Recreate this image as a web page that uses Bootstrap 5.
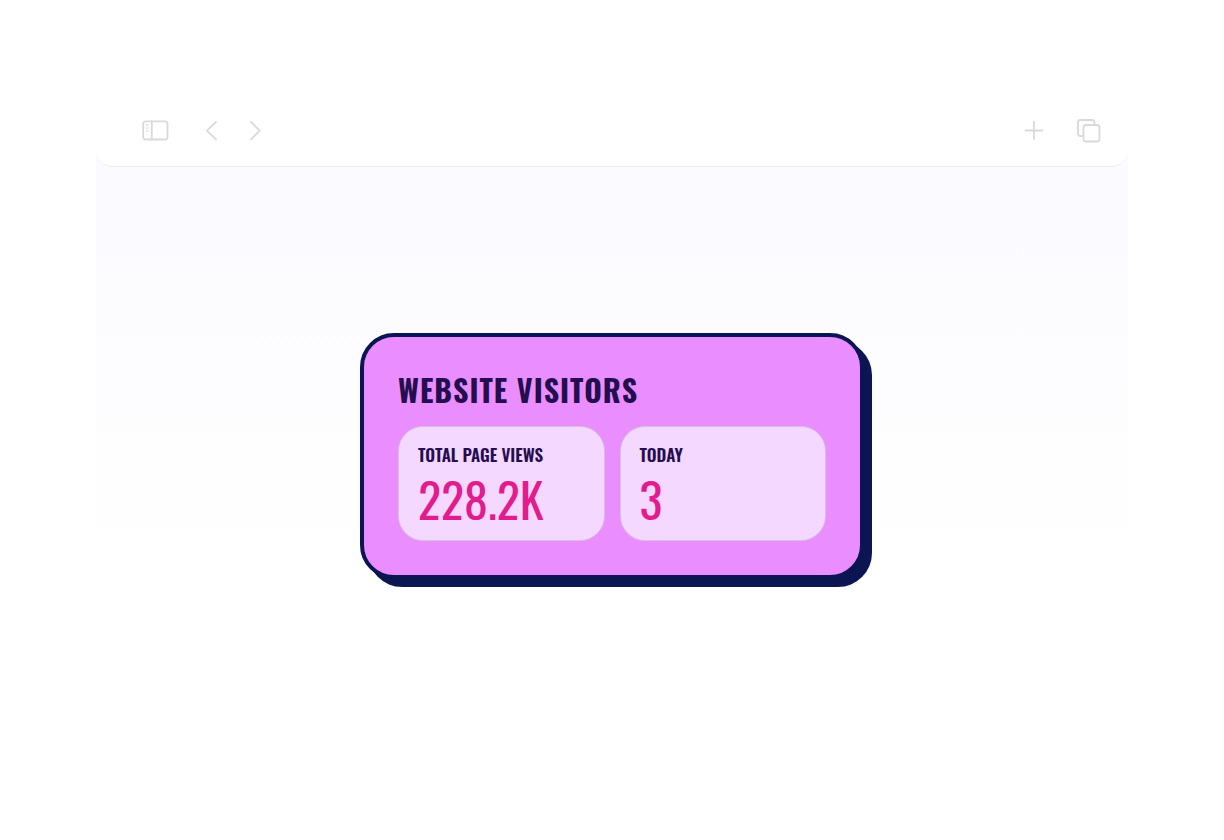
<!DOCTYPE html>
<html lang="en">
<head>
<meta charset="utf-8">
<meta name="viewport" content="width=device-width, initial-scale=1">
<title>Website Visitors</title>
<link href="https://cdn.jsdelivr.net/npm/bootstrap@5.3.0/dist/css/bootstrap.min.css" rel="stylesheet">
<style>
  body { background: #fff; font-family: Oswald, "Liberation Sans Narrow", "Liberation Sans", sans-serif; color: #240e50; }
  .page { padding: 96px; }
  .browser-view { background: linear-gradient(#fafaff 70px, #fcfcff 200px, #fefefe 400px, #fff 500px); }
  .toolbar { height: 71px; padding: 0 26px 0 46px; background: #fff; border-bottom: 1px solid #ededf0; border-radius: 0 0 16px 16px; }
  .tool { padding: 0; border: 0; background: none; line-height: 0; }
  .tool svg { fill: none; stroke: #d9d9d9; stroke-width: 1.8; stroke-linecap: round; stroke-linejoin: round; }
  .stage { padding: 166px 16px 0; }
  .visitors { width: 100%; max-width: 504px; padding: 34px; background: #ea8eff; border: 4px solid #0a1551; border-radius: 34px; box-shadow: 8px 8px 0 #0a1551; }
  .visitors h1 { font-size: 30px; line-height: 38px; margin-bottom: 17px; font-weight: 700; letter-spacing: 1px; }
  .stats { gap: 15px; }
  .stat { padding: 16px 19px 10px; background: #f4d8ff; border: 1px solid #d5c0e2; border-radius: 25px; }
  .stat dt { font-size: 17px; line-height: 24px; font-weight: 600; }
  .stat dd { font-size: 48px; line-height: 63px; color: #e31c8d; }
</style>
</head>
<body>
<main class="page">
  <div class="browser-view">
    <nav class="toolbar d-flex align-items-center justify-content-between" aria-label="Browser">
      <div class="d-flex align-items-center">
        <button class="tool" type="button" aria-label="Sidebar"><svg width="28" height="22" viewBox="0 0 28 22"><rect x="1.200" y="1.300" width="24.300" height="18.200" rx="2.500"/><path d="M9.800 1.500v18"/><path d="M4 5h2.500M4 8h2.500M4 11h2.500" stroke-width="1.200"/></svg></button>
        <button class="tool ms-4" type="button" aria-label="Back"><svg width="44" height="22" viewBox="0 0 44 22"><path d="M22 2L12.800 10.700l9.200 8.600"/></svg></button>
        <button class="tool" type="button" aria-label="Forward"><svg width="44" height="22" viewBox="0 0 44 22"><path d="M13 2l8.800 8.700-8.800 8.600"/></svg></button>
      </div>
      <div class="d-flex align-items-center">
        <button class="tool" type="button" aria-label="New tab"><svg width="52" height="26" viewBox="0 0 52 26"><path d="M1.500 12.500h17M10 4v17"/></svg></button>
        <button class="tool" type="button" aria-label="Tabs"><svg width="26" height="26" viewBox="0 0 26 26"><path d="M7 18H4.500a2.500 2.500 0 0 1-2.500-2.500V4.500a2.500 2.500 0 0 1 2.500-2.500H16A2.500 2.500 0 0 1 18.500 4.500v2"/><rect x="7.500" y="7" width="16" height="16.500" rx="2.500"/></svg></button>
      </div>
    </nav>
    <div class="stage d-flex justify-content-center">
      <section class="visitors">
        <h1>WEBSITE VISITORS</h1>
        <dl class="stats d-flex mb-0">
          <div class="stat flex-fill w-50"><dt>TOTAL PAGE VIEWS</dt><dd class="mb-0">228.2K</dd></div>
          <div class="stat flex-fill w-50"><dt>TODAY</dt><dd class="mb-0">3</dd></div>
        </dl>
      </section>
    </div>
  </div>
</main>
<script src="https://cdn.jsdelivr.net/npm/bootstrap@5.3.0/dist/js/bootstrap.bundle.min.js"></script>
</body>
</html>
